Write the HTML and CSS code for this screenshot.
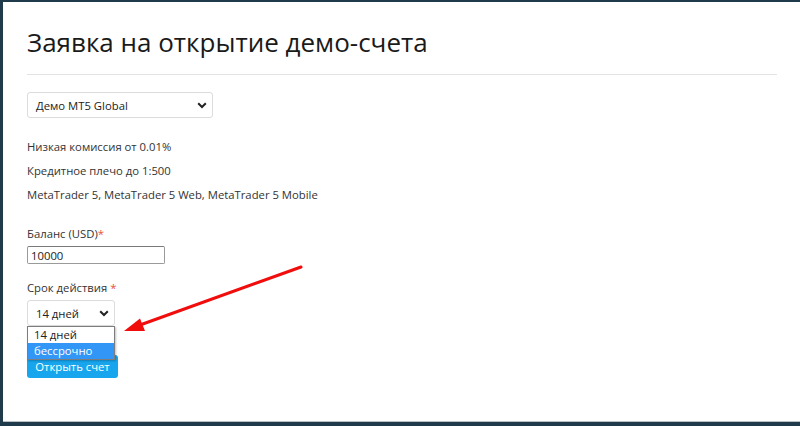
FILE: index.html
```html
<!DOCTYPE html>
<html lang="ru">

<head>
  <meta charset="UTF-8">
  <meta name="viewport" content="width=device-width, initial-scale=1.0">
  <title>Заявка на открытие демо-счета</title>
  <link rel="stylesheet" href="styles.css">
</head>

<body>
  <div class="frame">
    <div class="page">
      <h1 class="title">Заявка на открытие демо-счета</h1>
      <div class="divider"></div>

      <div class="select select-account">
        <span>Демо MT5 Global</span>
        <svg class="chevron" width="10" height="7" viewBox="0 0 10 7"><path d="M1.2 1.2L5 5l3.8-3.8" fill="none" stroke="#222" stroke-width="2"/></svg>
      </div>

      <div class="info">
        <p>Низкая комиссия от 0.01%</p>
        <p>Кредитное плечо до 1:500</p>
        <p>MetaTrader 5, MetaTrader 5 Web, MetaTrader 5 Mobile</p>
      </div>

      <div class="field field-balance">
        <label class="label">Баланс (USD)<span class="req">*</span></label>
        <input type="text" class="input" value="10000">
      </div>

      <div class="field field-term">
        <label class="label">Срок действия <span class="req">*</span></label>
        <div class="term-wrap">
          <div class="select select-term">
            <span>14 дней</span>
            <svg class="chevron" width="10" height="7" viewBox="0 0 10 7"><path d="M1.2 1.2L5 5l3.8-3.8" fill="none" stroke="#222" stroke-width="2"/></svg>
          </div>
          <ul class="options">
            <li>14 дней</li>
            <li class="active">бессрочно</li>
          </ul>
        </div>
      </div>

      <button class="button">Открыть счет</button>
    </div>

    <svg class="arrow" width="800" height="426" viewBox="0 0 800 426">
      <line x1="301" y1="267" x2="140" y2="325" stroke="#f20d0d" stroke-width="3" stroke-linecap="round"/>
      <polygon points="124,331 140,318.5 145,331" fill="#f20d0d"/>
    </svg>
  </div>
</body>

</html>
```

FILE: styles.css
```css
body {
  margin: 0;
  font-family: "Open Sans", Arial, sans-serif;
  color: #333;
  background-color: #fff;
}

.frame {
  position: relative;
  height: 426px;
  box-sizing: border-box;
  border-top: 2px solid #1f3a4a;
  border-left: 3px solid #1f3a4a;
  border-bottom: 4px solid #1f3a4a;
  box-shadow: inset 0 -1px 0 #b9c0c4;
  overflow: hidden;
}

.page {
  padding: 22px 23px 0 24px;
}

.title {
  margin: 0;
  font-size: 26px;
  line-height: 36px;
  font-weight: 400;
  color: #1a1a1a;
}

.divider {
  margin-top: 14px;
  border-top: 1px solid #e3e3e3;
}

.select {
  display: flex;
  align-items: center;
  justify-content: space-between;
  box-sizing: border-box;
  height: 26px;
  padding: 0 5px 0 8px;
  border: 1px solid #dcdcdc;
  border-radius: 3px;
  font-size: 11.3px;
  color: #222;
}

.select-account {
  width: 186px;
  margin-top: 17px;
}

.info {
  margin-top: 17px;
}

.info p {
  margin: 0;
  font-size: 11.3px;
  line-height: 24px;
}

.field {
  display: flex;
  flex-direction: column;
  align-items: flex-start;
}

.field-balance {
  margin-top: 15px;
}

.field-term {
  margin-top: 12px;
}

.label {
  font-size: 11.3px;
  line-height: 24px;
}

.req {
  color: #e5533d;
}

.input {
  box-sizing: border-box;
  width: 138px;
  height: 18px;
  margin: 0;
  padding: 0 3px;
  border: 1px solid #9a9a9a;
  border-top-color: #7a7a7a;
  border-radius: 2px;
  font-family: inherit;
  font-size: 11.3px;
  color: #222;
}

.term-wrap {
  position: relative;
}

.select-term {
  width: 88px;
}

.options {
  position: absolute;
  top: 26px;
  left: 0;
  width: 88px;
  box-sizing: border-box;
  margin: 0;
  padding: 0;
  list-style: none;
  background: #fff;
  border: 1px solid #7d7d7d;
  box-shadow: 1px 1px 2px rgba(0, 0, 0, 0.25);
  z-index: 2;
}

.options li {
  height: 16px;
  line-height: 16px;
  padding: 0 6px;
  font-size: 11.3px;
  color: #222;
}

.options li.active {
  background-color: #3296f7;
  color: #fff;
}

.button {
  display: block;
  width: 91px;
  height: 23px;
  margin-top: 29px;
  padding: 0;
  border: none;
  border-radius: 3px;
  background-color: #17a6ee;
  color: #fff;
  font-family: inherit;
  font-size: 11.3px;
}

.arrow {
  position: absolute;
  top: -2px;
  left: -3px;
  pointer-events: none;
}
```
